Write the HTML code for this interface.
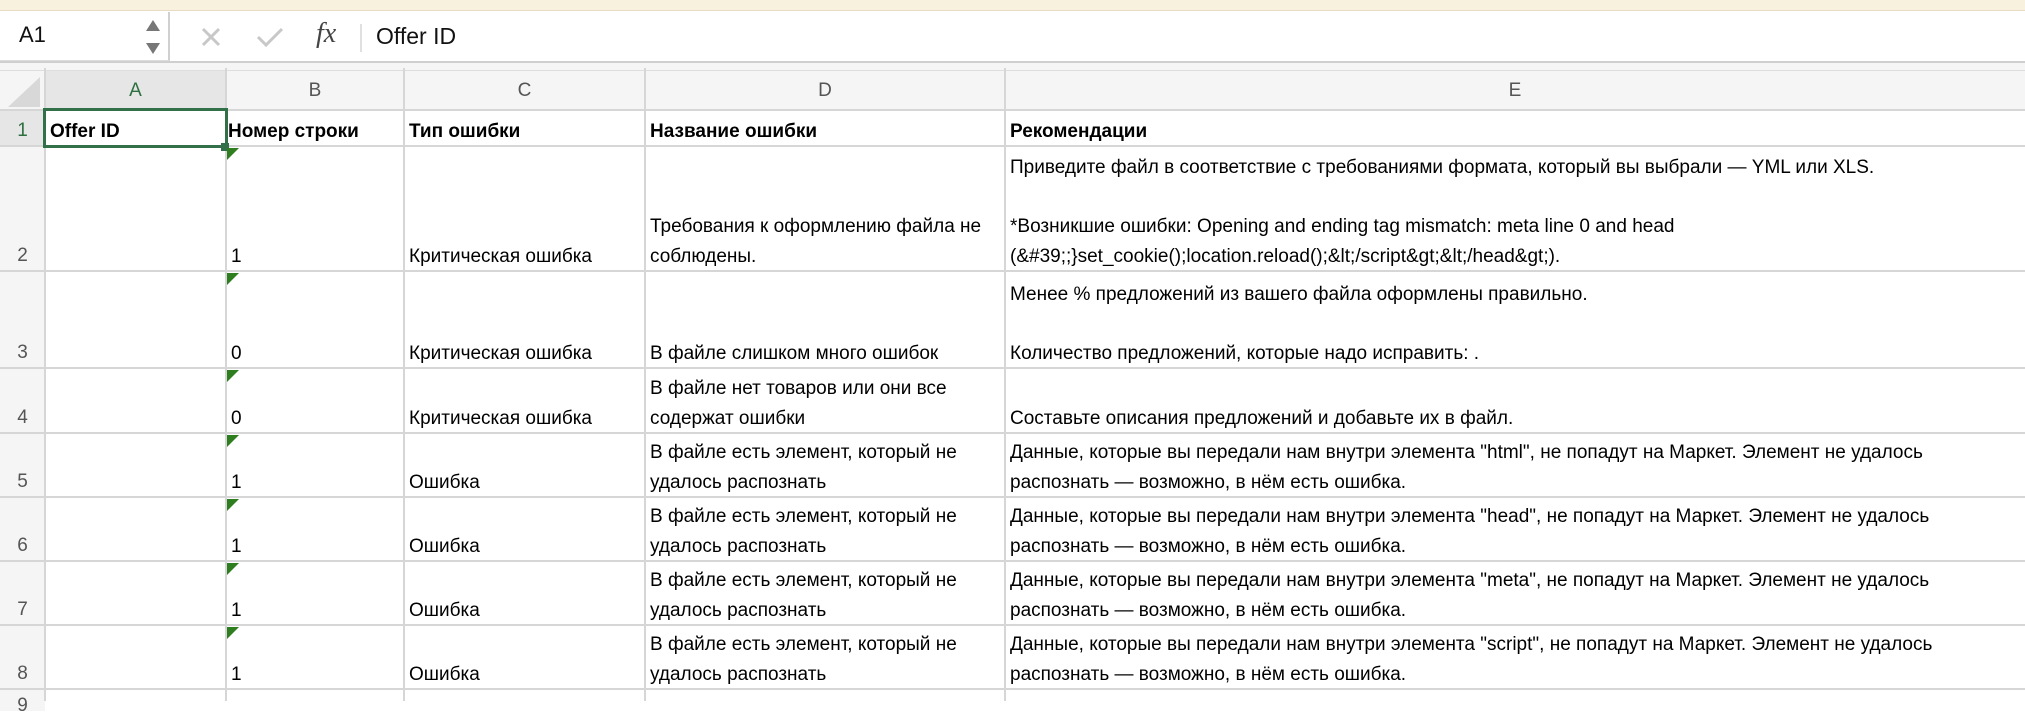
<!DOCTYPE html>
<html><head><meta charset="utf-8"><style>
*{margin:0;padding:0;box-sizing:border-box}
body{width:2025px;height:701px;overflow:hidden;background:#fff;font-family:"Liberation Sans","DejaVu Sans",sans-serif;position:relative;color:#000}
.abs{position:absolute}
.vl{position:absolute;top:68px;bottom:0;width:2px;background:#d6d6d6}
.hl{position:absolute;left:0;right:0;height:2px;background:#d6d6d6}
.c{position:absolute;display:flex;flex-direction:column;justify-content:flex-end;font-size:19px;line-height:29.5px;white-space:nowrap;padding-left:4px;padding-bottom:0}
.b{font-weight:bold}
.rn{position:absolute;left:0;width:45px;text-align:center;font-size:19px;color:#555;display:flex;align-items:flex-end;justify-content:center;padding-bottom:4px}
.tri{position:absolute;left:227px;width:0;height:0;border-top:12px solid #2e7d1e;border-right:12px solid transparent}
.ch{position:absolute;top:71px;height:40px;font-size:19px;color:#555;text-align:center;line-height:40px}
</style></head><body>
<div class="abs" style="left:0;top:0;width:2025px;height:11px;background:#f8f1de;border-bottom:1px solid #e6dcc4"></div>
<div class="abs" style="left:0;top:11px;width:2025px;height:52px;background:#fff;border-bottom:2px solid #cfcfcf"></div>
<div class="abs" style="left:0;top:12px;width:170px;height:49px;border-right:2px solid #d0d0d0;border-bottom:1px solid #ddd"></div>
<div class="abs" style="left:19px;top:22px;font-size:22px;color:#111">A1</div>
<svg class="abs" style="left:145px;top:18px" width="16" height="38"><path d="M8 2 L15 13 L1 13 Z" fill="#777"/><path d="M8 36 L15 25 L1 25 Z" fill="#777"/></svg>
<svg class="abs" style="left:200px;top:26px" width="22" height="22"><path d="M3 3 L19 19 M19 3 L3 19" stroke="#c8c8c8" stroke-width="3"/></svg>
<svg class="abs" style="left:256px;top:26px" width="28" height="22"><path d="M2 11 L10 19 L26 3" stroke="#c8c8c8" stroke-width="3" fill="none"/></svg>
<div class="abs" style="left:316px;top:18px;font-family:'Liberation Serif',serif;font-style:italic;font-size:28px;color:#444">fx</div>
<div class="abs" style="left:360px;top:24px;width:2px;height:28px;background:#e0e0e0"></div>
<div class="abs" style="left:376px;top:23px;font-size:23px;color:#111">Offer ID</div>
<div class="abs" style="left:0;top:63px;width:2025px;height:8px;background:#f5f5f5;border-bottom:1px solid #ddd"></div>
<div class="abs" style="left:0;top:71px;width:2025px;height:40px;background:#f5f5f5"></div>
<div class="abs" style="left:45px;top:71px;width:181px;height:40px;background:#e6e6e6"></div>
<svg class="abs" style="left:8px;top:77px" width="33" height="30"><path d="M32 0 L32 30 L0 30 Z" fill="#d8d8d8"/></svg>
<div class="abs" style="left:0;top:111px;width:45px;height:600px;background:#f5f5f5"></div>
<div class="abs" style="left:0;top:111px;width:45px;height:36px;background:#e6e6e6"></div>
<div class="ch" style="left:45px;width:181px;color:#2e7040">A</div>
<div class="ch" style="left:226px;width:178px">B</div>
<div class="ch" style="left:404px;width:241px">C</div>
<div class="ch" style="left:645px;width:360px">D</div>
<div class="ch" style="left:1005px;width:1020px">E</div>
<div class="vl" style="left:44px"></div>
<div class="vl" style="left:225px"></div>
<div class="vl" style="left:403px"></div>
<div class="vl" style="left:644px"></div>
<div class="vl" style="left:1004px"></div>
<div class="hl" style="top:109px"></div>
<div class="hl" style="top:145px"></div>
<div class="hl" style="top:270px"></div>
<div class="hl" style="top:367px"></div>
<div class="hl" style="top:432px"></div>
<div class="hl" style="top:496px"></div>
<div class="hl" style="top:560px"></div>
<div class="hl" style="top:624px"></div>
<div class="hl" style="top:688px"></div>
<div class="rn" style="top:111px;height:35px;color:#2e7040">1</div>
<div class="rn" style="top:147px;height:124px">2</div>
<div class="rn" style="top:272px;height:96px">3</div>
<div class="rn" style="top:369px;height:64px">4</div>
<div class="rn" style="top:434px;height:63px">5</div>
<div class="rn" style="top:498px;height:63px">6</div>
<div class="rn" style="top:562px;height:63px">7</div>
<div class="rn" style="top:626px;height:63px">8</div>
<div class="rn" style="top:695px;height:20px;padding:0;align-items:flex-start">9</div>
<!-- row1 -->
<div class="c b" style="left:46px;top:111px;height:35px">Offer ID</div>
<div class="c b" style="left:227px;top:111px;height:35px;padding-left:1px">Номер строки</div>
<div class="c b" style="left:405px;top:111px;height:35px">Тип ошибки</div>
<div class="c b" style="left:646px;top:111px;height:35px">Название ошибки</div>
<div class="c b" style="left:1006px;top:111px;height:35px">Рекомендации</div>
<div class="abs" style="left:43px;top:108px;width:185px;height:40px;border:3px solid #32704a"></div>
<div class="abs" style="left:221px;top:143px;width:8px;height:8px;background:#32704a"></div>
<!-- row2 -->
<div class="c" style="left:227px;top:147px;height:124px">1</div>
<div class="c" style="left:405px;top:147px;height:124px">Критическая ошибка</div>
<div class="c" style="left:646px;top:147px;height:124px">Требования к оформлению файла не<br>соблюдены.</div>
<div class="c" style="left:1006px;top:147px;height:124px">Приведите файл в соответствие с требованиями формата, который вы выбрали — YML или XLS.<br>&nbsp;<br>*Возникшие ошибки: Opening and ending tag mismatch: meta line 0 and head<br>(&amp;#39;;}set_cookie();location.reload();&amp;lt;/script&amp;gt;&amp;lt;/head&amp;gt;).</div>
<!-- row3 -->
<div class="c" style="left:227px;top:272px;height:96px">0</div>
<div class="c" style="left:405px;top:272px;height:96px">Критическая ошибка</div>
<div class="c" style="left:646px;top:272px;height:96px">В файле слишком много ошибок</div>
<div class="c" style="left:1006px;top:272px;height:96px">Менее % предложений из вашего файла оформлены правильно.<br>&nbsp;<br>Количество предложений, которые надо исправить: .</div>
<!-- row4 -->
<div class="c" style="left:227px;top:369px;height:64px">0</div>
<div class="c" style="left:405px;top:369px;height:64px">Критическая ошибка</div>
<div class="c" style="left:646px;top:369px;height:64px">В файле нет товаров или они все<br>содержат ошибки</div>
<div class="c" style="left:1006px;top:369px;height:64px">Составьте описания предложений и добавьте их в файл.</div>
<!-- rows 5-8 -->
<div class="c" style="left:227px;top:434px;height:63px">1</div>
<div class="c" style="left:405px;top:434px;height:63px">Ошибка</div>
<div class="c" style="left:646px;top:434px;height:63px">В файле есть элемент, который не<br>удалось распознать</div>
<div class="c" style="left:1006px;top:434px;height:63px">Данные, которые вы передали нам внутри элемента "html", не попадут на Маркет. Элемент не удалось<br>распознать — возможно, в нём есть ошибка.</div>
<div class="c" style="left:227px;top:498px;height:63px">1</div>
<div class="c" style="left:405px;top:498px;height:63px">Ошибка</div>
<div class="c" style="left:646px;top:498px;height:63px">В файле есть элемент, который не<br>удалось распознать</div>
<div class="c" style="left:1006px;top:498px;height:63px">Данные, которые вы передали нам внутри элемента "head", не попадут на Маркет. Элемент не удалось<br>распознать — возможно, в нём есть ошибка.</div>
<div class="c" style="left:227px;top:562px;height:63px">1</div>
<div class="c" style="left:405px;top:562px;height:63px">Ошибка</div>
<div class="c" style="left:646px;top:562px;height:63px">В файле есть элемент, который не<br>удалось распознать</div>
<div class="c" style="left:1006px;top:562px;height:63px">Данные, которые вы передали нам внутри элемента "meta", не попадут на Маркет. Элемент не удалось<br>распознать — возможно, в нём есть ошибка.</div>
<div class="c" style="left:227px;top:626px;height:63px">1</div>
<div class="c" style="left:405px;top:626px;height:63px">Ошибка</div>
<div class="c" style="left:646px;top:626px;height:63px">В файле есть элемент, который не<br>удалось распознать</div>
<div class="c" style="left:1006px;top:626px;height:63px">Данные, которые вы передали нам внутри элемента "script", не попадут на Маркет. Элемент не удалось<br>распознать — возможно, в нём есть ошибка.</div>
<div class="tri" style="top:148px"></div>
<div class="tri" style="top:273px"></div>
<div class="tri" style="top:370px"></div>
<div class="tri" style="top:435px"></div>
<div class="tri" style="top:499px"></div>
<div class="tri" style="top:563px"></div>
<div class="tri" style="top:627px"></div>
</body></html>
